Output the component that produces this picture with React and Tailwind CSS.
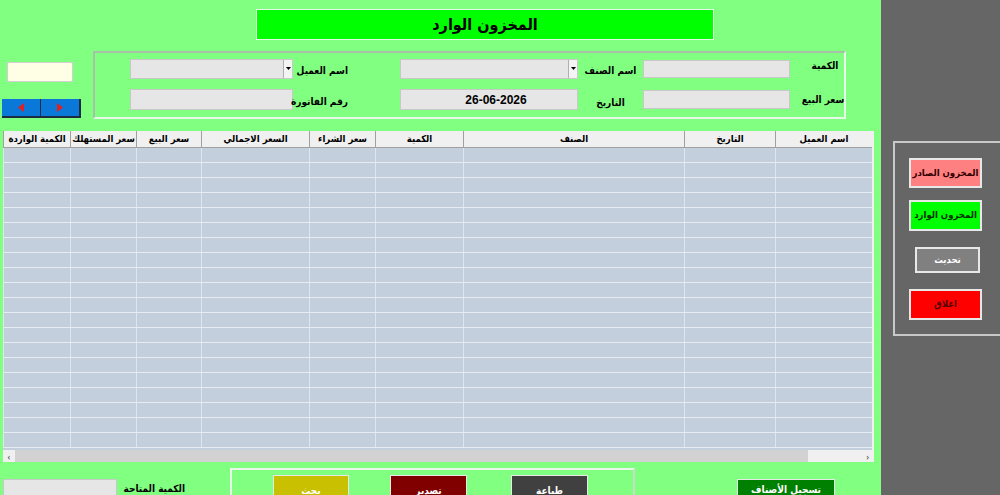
import React from "react";

const ar = { fontFamily: '"DejaVu Sans Condensed", "DejaVu Sans", sans-serif' };

const columns = [
  { name: "اسم العميل", w: 97 },
  { name: "التاريخ", w: 91 },
  { name: "الصنف", w: 221 },
  { name: "الكمية", w: 88 },
  { name: "سعر الشراء", w: 66 },
  { name: "السعر الاجمالي", w: 108 },
  { name: "سعر البيع", w: 65 },
  { name: "سعر المستهلك", w: 66 },
  { name: "الكمية الواردة", w: 67 },
];

const gridCols = "grid grid-cols-[97px_91px_221px_88px_66px_108px_65px_66px_67px]";

const Combo = ({ w }) => (
  <div className={`flex h-[20px] ${w} border border-[#c8c8c8] bg-[#e6e6e6]`}>
    <div className="flex-1" />
    <div className="flex w-[9px] items-center justify-center border-l border-[#b0b0b0] bg-[#f4f4f4]">
      <svg width="5" height="3" viewBox="0 0 5 3">
        <path d="M0 0h5L2.5 3z" fill="#000" />
      </svg>
    </div>
  </div>
);

const Label = ({ children, className = "" }) => (
  <div className={`whitespace-nowrap text-[10px] font-bold text-black ${className}`} style={ar} dir="rtl">
    {children}
  </div>
);

const SideButton = ({ children, className }) => (
  <div
    className={`flex shrink-0 items-center justify-center whitespace-nowrap border-2 border-[#e8e8e8] text-[9.5px] font-bold ${className}`}
    style={ar}
  >
    {children}
  </div>
);

export default function App() {
  const rows = [...Array(20)];
  return (
    <div className="flex h-[495px] w-[1000px] overflow-hidden bg-[#80ff80]">
      {/* main green area */}
      <div className="flex w-[881px] shrink-0 flex-col">
        {/* title */}
        <div className="h-[51px] shrink-0 pt-[9px] pl-[256px]">
          <div className="flex h-[31px] w-[458px] items-center justify-center border border-[#e8f8e8] bg-[#00ff00]">
            <span className="text-[16px] font-bold text-black" style={ar}>
              المخزون الوارد
            </span>
          </div>
        </div>

        {/* form band */}
        <div className="flex h-[68px] shrink-0">
          <div className="w-[93px] shrink-0">
            <div className="ml-[7px] mt-[11px] h-[20px] w-[66px] border border-[#d0d0d0] bg-[#ffffe6]" />
            <div className="ml-[2px] mt-[17px] flex h-[19px] w-[79px] border-b-2 border-r-2 border-[#1a2a40] bg-[#0a78d8]">
              <div className="flex flex-1 items-center justify-center border-r border-[#1a2a40]">
                <svg width="6" height="9" viewBox="0 0 6 9">
                  <path d="M6 0v9L0 4.5z" fill="#e02020" />
                </svg>
              </div>
              <div className="flex flex-1 items-center justify-center">
                <svg width="6" height="9" viewBox="0 0 6 9">
                  <path d="M0 0v9l6-4.5z" fill="#e02020" />
                </svg>
              </div>
            </div>
          </div>

          <div className="h-[68px] w-[753px] shrink-0 border-2 border-l-[#a8c0a8] border-t-[#a8c0a8] border-r-[#e8f8e8] border-b-[#e8f8e8] pl-[35px] pt-[5px]">
            <div className="grid h-[20px] grid-cols-[163px_107px_178px_65px_147px_56px] items-center">
              <Combo w="w-[163px]" />
              <Label className="pr-[52px] pt-[4px] text-right">اسم العميل</Label>
              <Combo w="w-[178px]" />
              <Label className="pt-[4px] text-center">اسم الصنف</Label>
              <div className="h-[18px] w-[147px] border border-[#c8c8c8] bg-[#e6e6e6]" />
              <Label className="pb-[6px] pl-[14px] text-center">الكمية</Label>
            </div>
            <div className="mt-[11px] grid h-[21px] grid-cols-[163px_107px_178px_65px_147px_56px] items-center">
              <div className="h-[21px] w-[163px] border border-[#c8c8c8] bg-[#e6e6e6]" />
              <Label className="pr-[52px] pt-[4px] text-right">رقم الفاتورة</Label>
              <div className="flex h-[21px] w-[178px] items-center justify-center border border-[#c8c8c8] bg-[#e6e6e6] pl-[14px]">
                <span className="text-[12px] font-bold text-black" style={{ fontFamily: '"Liberation Sans", Arial, sans-serif' }}>
                  26-06-2026
                </span>
              </div>
              <Label className="pt-[6px] text-center">التاريخ</Label>
              <div className="h-[19px] w-[147px] border border-[#c8c8c8] bg-[#e6e6e6]" />
              <Label className="pl-[10px] text-center">سعر البيع</Label>
            </div>
          </div>
        </div>

        {/* table */}
        <div className="ml-[3px] mt-[12px] flex h-[331px] w-[871px] shrink-0 flex-col border-r-2 border-[#f0f0f0] bg-[#c3cfdc]">
          <div className={`${gridCols} h-[17px] shrink-0 bg-[#f0f0f0]`} dir="rtl">
            {columns.map((c) => (
              <div
                key={c.name}
                className="flex items-center justify-center overflow-hidden whitespace-nowrap border-b border-l border-[#a0a0a0] text-[9.5px] font-bold text-black"
                style={ar}
              >
                {c.name}
              </div>
            ))}
          </div>
          <div className="flex-1 overflow-hidden">
            {rows.map((_, i) => (
              <div key={i} className={`${gridCols} h-[15px] border-b border-[#e6ecf2]`} dir="rtl">
                {columns.map((c) => (
                  <div key={c.name} className="border-l border-[#dfe6ee]" />
                ))}
              </div>
            ))}
          </div>
          <div className="flex h-[12px] shrink-0 bg-[#d2d2d2]">
            <div className="flex w-[12px] items-center justify-center bg-[#f0f0f0] text-[9px] leading-none text-[#404040]">‹</div>
            <div className="flex-1" />
            <div className="flex w-[64px] items-center justify-end bg-[#f0f0f0] pr-[3px] text-[9px] leading-none text-[#404040]">›</div>
          </div>
        </div>

        {/* bottom band */}
        <div className="flex flex-1">
          <div className="ml-[3px] mt-[17px] h-[20px] w-[114px] shrink-0 border border-[#c8c8c8] bg-[#e6e6e6]" />
          <Label className="ml-[8px] mt-[19px] w-[60px]">الكمية المتاحة</Label>
          <div className="ml-[45px] mt-[6px] flex h-[40px] w-[405px] shrink-0 border-2 border-b-0 border-l-[#e8f8e8] border-t-[#e8f8e8] border-r-[#c8dcc8] pl-[41px] pt-[5px]">
            <div className="flex h-[30px] w-[76px] justify-center whitespace-nowrap border border-[#e8e8e8] bg-[#c8c000] pt-[7px] text-[10px] font-bold text-white" style={ar}>
              بحث
            </div>
            <div className="ml-[41px] flex h-[30px] w-[77px] justify-center whitespace-nowrap border border-[#e8e8e8] bg-[#800000] pt-[7px] text-[10px] font-bold text-white" style={ar}>
              تصدير
            </div>
            <div className="ml-[44px] flex h-[30px] w-[77px] justify-center whitespace-nowrap border border-[#e8e8e8] bg-[#404040] pt-[7px] text-[10px] font-bold text-white" style={ar}>
              طباعة
            </div>
          </div>
          <div className="ml-[102px] mt-[17px] flex h-[30px] w-[98px] shrink-0 justify-center whitespace-nowrap border border-[#e8e8e8] bg-[#008000] pt-[2px] text-[10px] font-bold text-white" style={ar}>
            تسجيل الأصناف
          </div>
        </div>
      </div>

      {/* right gray panel */}
      <div className="flex-1 bg-[#666666] pl-[12px] pt-[141px]">
        <div className="flex h-[195px] w-[120px] flex-col border-2 border-[#c8c8c8] pl-[14px] pt-[15px]">
          <SideButton className="h-[30px] w-[73px] bg-[#ff8080] text-[#300000]">المخزون الصادر</SideButton>
          <SideButton className="mt-[12px] h-[31px] w-[73px] bg-[#00ff00] text-[#003000]">المخزون الوارد</SideButton>
          <SideButton className="ml-[6px] mt-[16px] h-[26px] w-[65px] bg-[#808080] text-white">تحديث</SideButton>
          <SideButton className="mt-[16px] h-[31px] w-[73px] bg-[#ff0000] text-[#500000]">اغلاق</SideButton>
        </div>
      </div>
    </div>
  );
}
